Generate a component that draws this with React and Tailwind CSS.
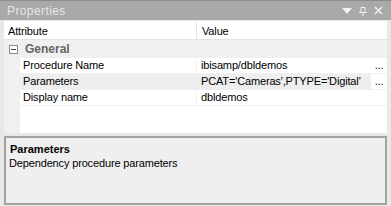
import React from 'react';

const rows = [
  { name: 'Procedure Name', value: 'ibisamp/dbldemos', dots: true, sel: false },
  { name: 'Parameters', value: "PCAT='Cameras',PTYPE='Digital'", dots: true, sel: true },
  { name: 'Display name', value: 'dbldemos', dots: false, sel: false },
];

export default function App() {
  return (
    <div className="w-[391px] h-[206px] bg-[#e6e6e6] flex flex-col overflow-hidden text-[11px] tracking-[-0.15px] text-black" style={{ fontFamily: '"Liberation Sans", Arial, sans-serif' }}>
      {/* title bar */}
      <div className="h-[20px] bg-[#a9a9a9] border-t border-[#8c8c8c] flex items-center justify-between pl-[7px] pr-[8px] text-[#e6e6e6]">
        <span className="text-[12px] tracking-[0.4px]">Properties</span>
        <div className="flex items-center gap-[7px]">
          <svg width="10" height="6" viewBox="0 0 10 6"><path d="M0 0h10L5 6z" fill="#f2f2f2" /></svg>
          <svg width="8" height="10" viewBox="0 0 8 10" fill="none" stroke="#f2f2f2">
            <path d="M2 1.5h4v5H2z" />
            <path d="M0 6.5h8M4 6.5v3.5" />
          </svg>
          <svg width="9" height="9" viewBox="0 0 9 9" stroke="#f2f2f2" strokeWidth="1.5"><path d="M1 1l7 7M8 1l-7 7" /></svg>
        </div>
      </div>

      <div className="flex-1 flex flex-col pl-[4px] pr-[4px] pb-[1px] pt-[1px] bg-[#e8e8e8]">
        {/* grid */}
        <div className="bg-white flex flex-col h-[112px]">
          <div className="h-[19px] flex items-center border-b border-[#e3e3e3]">
            <div className="w-[193px] pl-[4px] pt-[3px] border-r border-[#e3e3e3] h-full flex items-center">Attribute</div>
            <div className="pl-[5px] pt-[3px]">Value</div>
          </div>
          <div className="h-[18px] bg-[#f0f0f0] flex items-center">
            <div className="w-[9px] h-[9px] ml-[5px] border border-[#8a8a8a] bg-white flex items-center justify-center">
              <div className="w-[5px] h-px bg-[#444]" />
            </div>
            <span className="ml-[7px] font-bold text-[12px] tracking-normal text-[#666]">General</span>
          </div>
          {rows.map((r) => (
            <div key={r.name} className="h-[16px] flex border-b border-[#f0f0f0]">
              <div className="w-[16px] bg-[#f0f0f0]" />
              <div className={`w-[177px] pl-[3px] flex items-center border-r border-[#f0f0f0] ${r.sel ? 'bg-[#eeeeee]' : ''}`}>{r.name}</div>
              <div className={`flex-1 pl-[4px] flex items-center whitespace-nowrap ${r.sel ? 'bg-[#eeeeee]' : ''}`}>{r.value}</div>
              <div className="w-[16px] flex items-center justify-center bg-white">{r.dots ? '...' : ''}</div>
            </div>
          ))}
          <div className="flex-1 flex">
            <div className="w-[16px] bg-[#f0f0f0]" />
          </div>
        </div>
        <div className="h-[3px]" />
        {/* description */}
        <div className="flex-1 border-2 border-[#a3a3a3] bg-[#efefef] pl-[3px] pt-[4px] leading-[14px]">
          <div className="font-bold tracking-normal pl-[1px]">Parameters</div>
          <div>Dependency procedure parameters</div>
        </div>
      </div>
    </div>
  );
}
